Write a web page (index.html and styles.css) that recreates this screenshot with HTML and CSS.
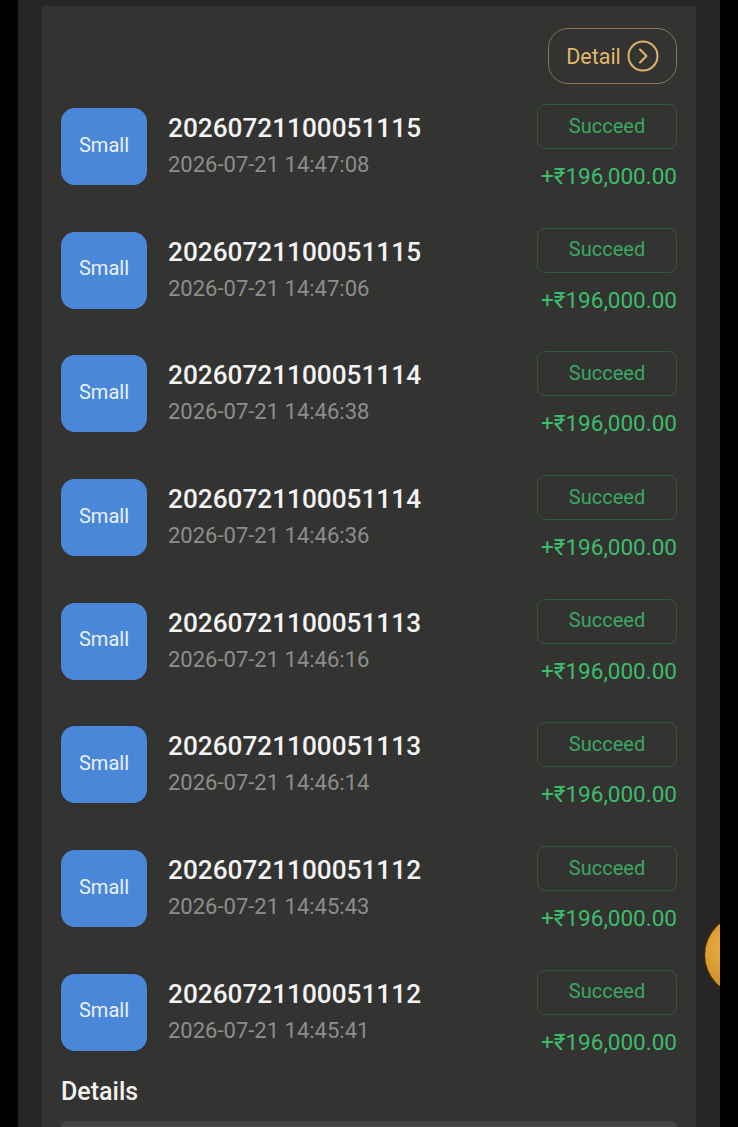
FILE: index.html
```html
<!DOCTYPE html>
<html lang="en">
<head>
<meta charset="UTF-8">
<meta name="viewport" content="width=device-width, initial-scale=1.0">
<title>Records</title>
<link rel="stylesheet" href="styles.css">
</head>
<body>
<div class="screen">
  <div class="card">
    <div class="card-head">
      <button class="detail-btn">Detail
        <svg width="32" height="32" viewBox="0 0 32 32"><circle cx="16" cy="16" r="14.5" fill="none" stroke="#d9b36a" stroke-width="2"/><path d="M13 9.5 L19.5 16 L13 22.5" fill="none" stroke="#d9b36a" stroke-width="2.2" stroke-linecap="round" stroke-linejoin="round"/></svg>
      </button>
    </div>
    <div class="records">
      <div class="record">
        <div class="tag">Small</div>
        <div class="info"><div class="order">20260721100051115</div><div class="time">2026-07-21 14:47:08</div></div>
        <div class="side"><div class="status">Succeed</div><div class="amount">+₹196,000.00</div></div>
      </div>
      <div class="record">
        <div class="tag">Small</div>
        <div class="info"><div class="order">20260721100051115</div><div class="time">2026-07-21 14:47:06</div></div>
        <div class="side"><div class="status">Succeed</div><div class="amount">+₹196,000.00</div></div>
      </div>
      <div class="record">
        <div class="tag">Small</div>
        <div class="info"><div class="order">20260721100051114</div><div class="time">2026-07-21 14:46:38</div></div>
        <div class="side"><div class="status">Succeed</div><div class="amount">+₹196,000.00</div></div>
      </div>
      <div class="record">
        <div class="tag">Small</div>
        <div class="info"><div class="order">20260721100051114</div><div class="time">2026-07-21 14:46:36</div></div>
        <div class="side"><div class="status">Succeed</div><div class="amount">+₹196,000.00</div></div>
      </div>
      <div class="record">
        <div class="tag">Small</div>
        <div class="info"><div class="order">20260721100051113</div><div class="time">2026-07-21 14:46:16</div></div>
        <div class="side"><div class="status">Succeed</div><div class="amount">+₹196,000.00</div></div>
      </div>
      <div class="record">
        <div class="tag">Small</div>
        <div class="info"><div class="order">20260721100051113</div><div class="time">2026-07-21 14:46:14</div></div>
        <div class="side"><div class="status">Succeed</div><div class="amount">+₹196,000.00</div></div>
      </div>
      <div class="record">
        <div class="tag">Small</div>
        <div class="info"><div class="order">20260721100051112</div><div class="time">2026-07-21 14:45:43</div></div>
        <div class="side"><div class="status">Succeed</div><div class="amount">+₹196,000.00</div></div>
      </div>
      <div class="record">
        <div class="tag">Small</div>
        <div class="info"><div class="order">20260721100051112</div><div class="time">2026-07-21 14:45:41</div></div>
        <div class="side"><div class="status">Succeed</div><div class="amount">+₹196,000.00</div></div>
      </div>
    </div>
    <h3 class="section-title">Details</h3>
    <div class="details-box"></div>
  </div>
  <div class="coin"></div>
</div>
</body>
</html>
```

FILE: styles.css
```css
body {
  margin: 0;
  background: #000;
  font-family: Roboto, "Noto Sans", sans-serif;
}
.screen {
  position: relative;
  margin: 0 18px;
  height: 1127px;
  padding: 6px 24px 0;
  background: #262626;
  overflow: hidden;
  box-sizing: border-box;
}
.card {
  background: #333331;
  padding: 22px 19px 0;
  height: 100%;
  box-sizing: border-box;
}
.card-head {
  display: flex;
  justify-content: flex-end;
}
.detail-btn {
  display: flex;
  align-items: center;
  justify-content: center;
  gap: 6px;
  width: 129px;
  height: 56px;
  padding: 0;
  background: transparent;
  border: 1px solid #8a7752;
  border-radius: 20px;
  color: #dfb86e;
  font-family: Roboto, sans-serif;
  font-size: 21.5px;
}
.records {
  display: flex;
  flex-direction: column;
  gap: 23.7px;
  margin-top: 20px;
}
.record {
  display: grid;
  grid-template-columns: 86px 1fr 140px;
  column-gap: 21px;
  height: 100px;
}
.tag {
  margin-top: 4px;
  height: 77px;
  box-sizing: border-box;
  padding-bottom: 4px;
  border-radius: 14px;
  background: #4b87d8;
  color: #e9f1fb;
  font-size: 20px;
  display: flex;
  align-items: center;
  justify-content: center;
}
.info {
  padding-top: 9px;
}
.order {
  color: #f3f3f3;
  font-size: 26.2px;
  font-weight: 500;
  line-height: 30px;
}
.time {
  margin-top: 9px;
  color: #8d8d8d;
  font-size: 22px;
  line-height: 26px;
}
.status {
  height: 45px;
  box-sizing: border-box;
  border: 1px solid #2e5a3f;
  border-radius: 8px;
  color: #3aa863;
  font-size: 20px;
  display: flex;
  align-items: center;
  justify-content: center;
  padding-bottom: 2px;
}
.amount {
  margin-top: 15px;
  text-align: right;
  color: #3dbd6c;
  font-size: 22.5px;
  line-height: 24px;
  white-space: nowrap;
}
.section-title {
  margin: 8px 0 0;
  color: #f2f2f2;
  font-size: 25px;
  font-weight: 500;
  line-height: 28px;
}
.details-box {
  margin-top: 15px;
  height: 40px;
  background: #454545;
  border-radius: 6px 6px 0 0;
}
.coin {
  position: absolute;
  left: 687px;
  top: 915px;
  width: 80px;
  height: 80px;
  border-radius: 50%;
  background: radial-gradient(circle at 35% 40%, #f1b54a, #c98a1f 70%, #8a5a10);
  box-shadow: 0 0 0 2px #3a2a10;
}
```
